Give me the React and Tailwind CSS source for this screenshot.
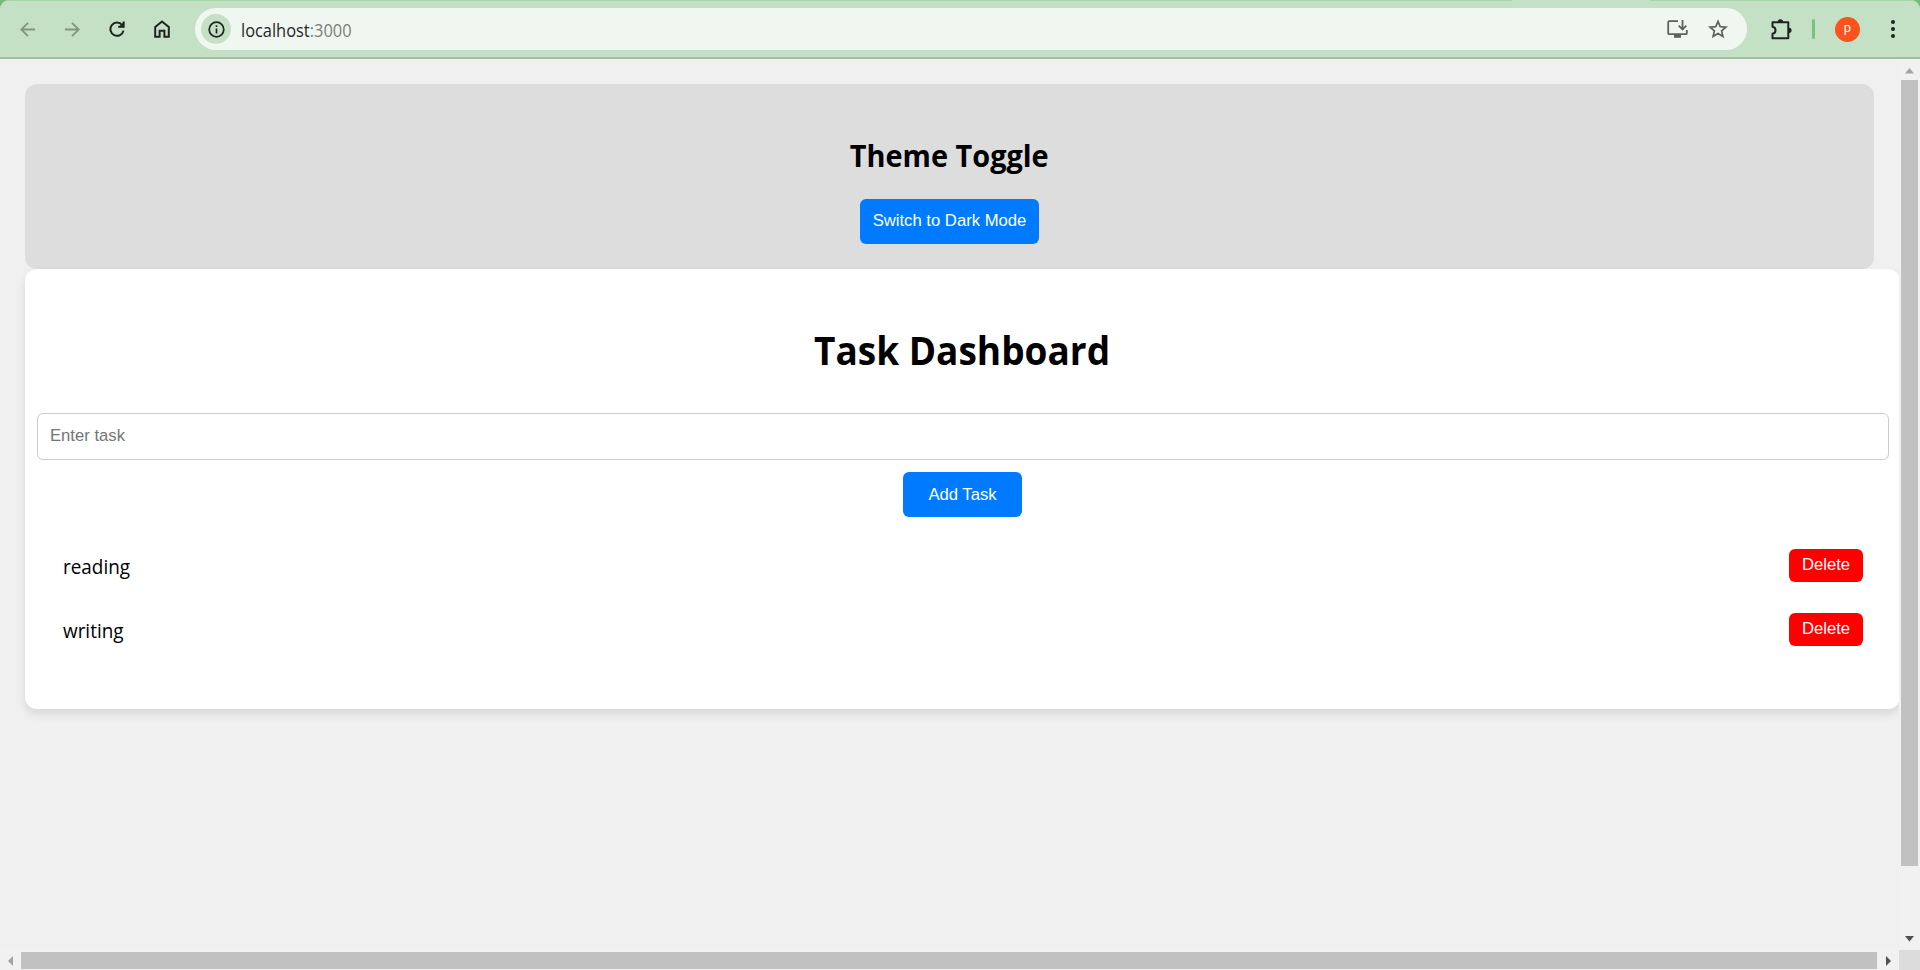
import React from "react";

const Heading = ({ as: Tag, className, children }) => (
  <Tag className={`whitespace-nowrap font-bold ${className}`}>{children}</Tag>
);

const tasks = [
  { id: 1, name: "reading" },
  { id: 2, name: "writing" },
];

function Toolbar() {
  return (
    <div className="h-[60px] shrink-0 bg-[linear-gradient(#79b97b_20px,#f0f0f0_20px)]">
      <div className="flex h-[59px] flex-col overflow-hidden rounded-t-[9px] border-b-2 border-b-[#a3bea4] bg-[#c5e1c5]">
        <div className="flex h-px shrink-0">
          <div className="w-[1512px] bg-[#a6d6a8]" />
          <div className="ml-[138px] flex-1 bg-[#a6d6a8]" />
        </div>
        <div className="flex items-center pt-[7px]">
          <div className="flex h-[42px] w-[195px] shrink-0 items-center">
            <svg className="ml-[20px] size-[15px]" viewBox="0 0 15 15" fill="none" stroke="#82957f" strokeWidth="1.8">
              <path d="M15 7.5H1.5M8 .8 1.3 7.5 8 14.2" />
            </svg>
            <svg className="ml-[30px] size-[15px]" viewBox="0 0 15 15" fill="none" stroke="#82957f" strokeWidth="1.8">
              <path d="M0 7.5h13.5M7 .8l6.7 6.7L7 14.2" />
            </svg>
            <svg className="ml-[29px] size-[16px]" viewBox="0 0 16 16" fill="none" stroke="#1f2421" strokeWidth="2">
              <path d="M13.2 4.1A6.6 6.6 0 1 0 14.5 9.6M14.6.6v5.2H9.2" />
              <path d="M15.200.600v5.600H9.600z" fill="#1f2421" stroke="none" />
            </svg>
            <svg className="ml-[29px] h-[18px] w-[16px]" viewBox="0 0 16 18" fill="none" stroke="#1f2421" strokeWidth="2">
              <path d="M1.2 16.8V6.9L8 1.5l6.8 5.4v9.9h-4.4v-6H5.6v6z" />
            </svg>
          </div>
          <div className="flex h-[42px] w-[1552px] shrink-0 items-center rounded-full bg-[#f0f7f0]">
            <div className="ml-[6px] flex size-[30px] items-center justify-center rounded-full bg-[#c5e1c5]">
              <svg className="size-[17px]" viewBox="0 0 17 17" fill="none" stroke="#1f2421" strokeWidth="1.7">
                <circle cx="8.5" cy="8.5" r="7.3" />
                <path d="M8.5 7.6v5M8.5 4.2v1.8" />
              </svg>
            </div>
            <div className="ml-[10px] mt-[1px] origin-left scale-x-[0.937] whitespace-nowrap font-['Open_Sans',sans-serif] text-[17.5px] leading-[24px] text-[#7a807b]">
              <span className="text-[#24292a]">localhost</span>:3000
            </div>
            <svg className="ml-auto h-[18px] w-[21px]" viewBox="0 0 21 18" fill="none" stroke="#5c625d" strokeWidth="1.8">
              <path d="M11 1.2H2.2q-1 0-1 1v11q0 1 1 1h16.6q1 0 1-1V10M15.500 0v9.300M11.700 5.700l3.800 3.800 3.800-3.800" />
              <path d="M7 16.300h7" strokeWidth="3" />
            </svg>
            <svg className="ml-[20px] mr-[19px] size-[20px]" viewBox="0 0 20 20" fill="none" stroke="#5c625d" strokeWidth="1.7">
              <path d="m10 2.400 2.200 5.300 5.700.5-4.300 3.700 1.300 5.600-4.900-3-4.900 3 1.300-5.600L2.100 8.200l5.700-.5z" />
            </svg>
          </div>
          <div className="flex h-[42px] flex-1 items-center">
            <svg className="ml-[24px] h-[21px] w-[21px]" viewBox="0 0 21 21" fill="none" stroke="#1f2421" strokeWidth="2">
              <path d="M1.500 3.200h15.800v16H1.500v-4.500c4-.5 4-6.500 0-7z" strokeLinejoin="round" />
              <path d="M6.700 3a2.700 2.700 0 0 1 5.400 0M18 8.700a2.600 2.600 0 0 1 0 5.200z" fill="#1f2421" stroke="none" />
            </svg>
            <div className="ml-[20px] h-[20px] w-[3px] rounded-full bg-[#7fbf81]" />
            <div className="ml-[20px] flex size-[25px] items-center justify-center rounded-full bg-[#f9531e] pb-[2px] font-[Roboto,sans-serif] text-[13px] text-white">p</div>
            <svg className="ml-[30.500px] h-[18px] w-[4px]" viewBox="0 0 4 18" fill="#1f2421">
              <circle cx="2" cy="2" r="2" />
              <circle cx="2" cy="9" r="2" />
              <circle cx="2" cy="16" r="2" />
            </svg>
          </div>
        </div>
      </div>
    </div>
  );
}

function ThemeToggle() {
  return (
    <section className="flex h-[185px] w-[1849px] flex-col items-center rounded-[12px] bg-[#dddddd] pt-[52px]">
      <Heading as="h2" className="scale-x-[0.963] text-[30px] leading-[40px]">Theme Toggle</Heading>
      <button className="mt-[23px] h-[45px] w-[179px] whitespace-nowrap rounded-[6px] bg-[#007bff] pb-[2px] font-['Liberation_Sans',Arial,sans-serif] text-[16.67px] text-white">
        Switch to Dark Mode
      </button>
    </section>
  );
}

function TaskDashboard() {
  return (
    <section className="flex h-[440px] w-[1875px] flex-col items-center rounded-[12px] bg-white px-[12px] pt-[54px] shadow-[0_5px_10px_rgba(0,0,0,0.1)]">
      <Heading as="h1" className="scale-x-[0.925] text-[40px] leading-[54px]">Task Dashboard</Heading>
      <input
        className="mt-[36px] h-[47px] w-[1852px] shrink-0 rounded-[6px] border border-[#cccccc] pl-[12.500px] pb-[1px] font-['Liberation_Sans',Arial,sans-serif] text-[16.67px] placeholder:text-[#757575] placeholder:opacity-100"
        placeholder="Enter task"
      />
      <button className="mt-[12px] h-[45px] w-[119px] shrink-0 rounded-[6px] bg-[#007bff] pb-[1px] font-['Liberation_Sans',Arial,sans-serif] text-[16.67px] text-white">
        Add Task
      </button>
      <ul className="mt-[16px] w-full">
        {tasks.map((task) => (
          <li key={task.id} className="flex h-[64px] items-center justify-between pl-[25.500px] pr-[25px]">
            <span className="origin-left scale-x-[0.945] pt-[2px] text-[20px] leading-[27px]">{task.name}</span>
            <button className="h-[33px] w-[74px] rounded-[6px] bg-[#ff0000] pb-[1px] font-['Liberation_Sans',Arial,sans-serif] text-[16.67px] text-white">
              Delete
            </button>
          </li>
        ))}
      </ul>
    </section>
  );
}

function VerticalScrollbar() {
  return (
    <div className="flex w-[21px] shrink-0 flex-col bg-[#f1f1f1]">
      <svg className="ml-[6px] mt-[8px] h-[6px] w-[9px] shrink-0" viewBox="0 0 9 6" fill="#a3a3a3"><path d="M0 5.500 4.500 0 9 5.500z" /></svg>
      <div className="ml-[2px] mt-[6px] h-[786px] w-[17px] bg-[#c1c1c1]" />
      <svg className="ml-[6px] mt-[70px] h-[6px] w-[9px] shrink-0" viewBox="0 0 9 6" fill="#505050"><path d="M0 0h9L4.500 5.500z" /></svg>
    </div>
  );
}

function HorizontalScrollbar() {
  return (
    <div className="flex h-[20px] shrink-0 bg-[#f1f1f1]">
      <svg className="ml-[8px] mt-[6px] h-[10px] w-[5px]" viewBox="0 0 5 10" fill="#a3a3a3"><path d="M5 0v10L0 5z" /></svg>
      <div className="ml-[8px] mt-[2px] h-[17px] w-[1856px] bg-[#c1c1c1]" />
      <svg className="ml-[9px] mt-[6px] h-[10px] w-[5px]" viewBox="0 0 5 10" fill="#505050"><path d="M0 0v10l5-5z" /></svg>
      <div className="ml-auto h-[20px] w-[21px] bg-[#dcdcdc]" />
    </div>
  );
}

export default function App() {
  return (
    <div className="flex h-[970px] w-[1920px] flex-col overflow-hidden bg-[#f0f0f0] font-['Open_Sans',sans-serif] text-black">
      <Toolbar />
      <div className="flex h-[890px] shrink-0">
        <main className="w-[1899px] shrink-0 overflow-hidden pl-[25px] pt-[24px]">
          <ThemeToggle />
          <TaskDashboard />
        </main>
        <VerticalScrollbar />
      </div>
      <HorizontalScrollbar />
    </div>
  );
}
